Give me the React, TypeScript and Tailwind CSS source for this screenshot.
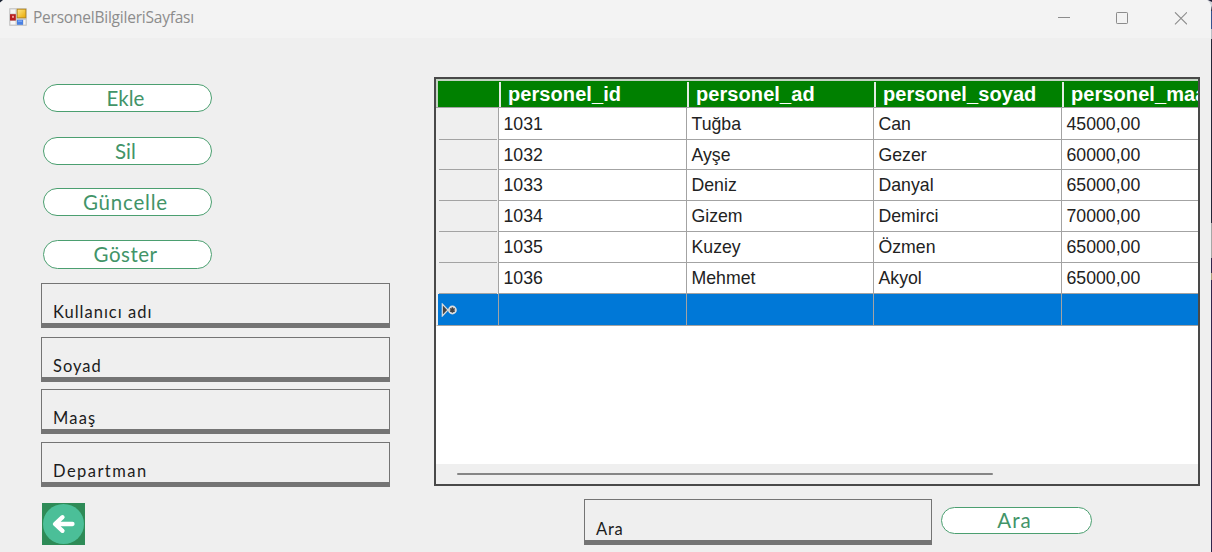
import type { ReactNode } from 'react';

const gothic = "font-['Century_Gothic','Lato',sans-serif]";

function PillButton({ children, className }: { children: ReactNode; className: string }) {
  return (
    <button
      className={`flex shrink-0 items-center justify-center rounded-full border-[1.5px] border-[#4b9f70] bg-white text-[20.5px] leading-none whitespace-nowrap text-[#429468] ${gothic} ${className}`}
    >
      {children}
    </button>
  );
}

function Field({ label, className }: { label: string; className: string }) {
  return (
    <div
      className={`flex shrink-0 items-end border border-b-[5px] border-[#747474] bg-[#efefef] pb-px pl-[11px] text-[16.5px] leading-5 whitespace-nowrap text-[#1c1c1c] ${gothic} ${className}`}
    >
      <span>{label}</span>
    </div>
  );
}

function AppIcon() {
  return (
    <svg width="18" height="18" viewBox="0 0 18 18" className="shrink-0">
      <defs>
        <linearGradient id="gold" x1="0" y1="0" x2="1" y2="1">
          <stop offset="0" stopColor="#ffe98a" />
          <stop offset="1" stopColor="#e9a800" />
        </linearGradient>
      </defs>
      <rect width="18" height="18" rx="1" fill="#cccccc" />
      <rect x="1.5" y="1.5" width="5" height="4" fill="#f7f7f7" />
      <rect x="1.5" y="13" width="5" height="3.5" fill="#f7f7f7" />
      <rect x="14.5" y="12" width="2" height="4.5" fill="#f7f7f7" />
      <rect x="1" y="6.2" width="5.8" height="6.3" fill="#b81f1f" />
      <rect x="3" y="7.8" width="2" height="2" fill="#ee9a94" />
      <rect x="8.2" y="1.2" width="8.6" height="8.6" fill="url(#gold)" stroke="#b98714" strokeWidth="0.9" />
      <rect x="8" y="11.8" width="6" height="5" fill="#4a80e2" />
      <rect x="9" y="12.5" width="4" height="1.3" fill="#82adf5" />
    </svg>
  );
}

const rows = [
  { id: '1031', ad: 'Tuğba', soyad: 'Can', maas: '45000,00', h: 'h-8' },
  { id: '1032', ad: 'Ayşe', soyad: 'Gezer', maas: '60000,00', h: 'h-[30px]' },
  { id: '1033', ad: 'Deniz', soyad: 'Danyal', maas: '65000,00', h: 'h-[31px]' },
  { id: '1034', ad: 'Gizem', soyad: 'Demirci', maas: '70000,00', h: 'h-[31px]' },
  { id: '1035', ad: 'Kuzey', soyad: 'Özmen', maas: '65000,00', h: 'h-[31px]' },
  { id: '1036', ad: 'Mehmet', soyad: 'Akyol', maas: '65000,00', h: 'h-[31px]' },
];

const columns = 'grid w-[812px] grid-cols-[63px_188px_187px_188px_186px]';

function HeaderCell({ children }: { children: string }) {
  return (
    <div className="flex items-center">
      <span className="h-[25px] w-0.5 shrink-0 bg-[#e4ebe4]" />
      <span className="pl-[7px] text-[20px] leading-none font-bold tracking-[0.08px]">{children}</span>
    </div>
  );
}

function Cell({ children }: { children?: string }) {
  return (
    <div className="flex items-center border-r border-b border-[#a3a3a3] pt-0.5 pl-[4.5px]">
      {children}
    </div>
  );
}

function DataGrid() {
  return (
    <div className="flex h-[409px] w-[766px] flex-col overflow-hidden border-2 border-[#494949] bg-white font-['Liberation_Sans',Arial,sans-serif] text-[17.7px] leading-none whitespace-nowrap text-[#222222]">
      <div className="h-0.5 shrink-0 bg-[#c4d4c4]" />
      <div className={`${columns} h-[27px] shrink-0 border-b border-[#a3a3a3] bg-[#008000] text-white`}>
        <div className="border-l-2 border-[#c4d4c4]" />
        <HeaderCell>personel_id</HeaderCell>
        <HeaderCell>personel_ad</HeaderCell>
        <HeaderCell>personel_soyad</HeaderCell>
        <HeaderCell>personel_maas</HeaderCell>
      </div>
      {rows.map((r) => (
        <div key={r.id} className={`${columns} ${r.h} shrink-0`}>
          <div className="flex border-r border-[#a3a3a3] bg-[#efefef] pr-px pl-[3px]">
            <div className="grow border-b border-[#a3a3a3]" />
          </div>
          <Cell>{r.id}</Cell>
          <Cell>{r.ad}</Cell>
          <Cell>{r.soyad}</Cell>
          <Cell>{r.maas}</Cell>
        </div>
      ))}
      <div className={`${columns} h-8 shrink-0 bg-[#0078d7]`}>
        <div className="flex items-center border-r border-b border-l-2 border-[#a3a3a3] border-l-[#efefef] pl-[3px]">
          <svg width="17" height="14" viewBox="0 0 17 14">
            <path d="M1.3 1v12L7 7z" fill="#444444" stroke="#dddddd" strokeWidth="1.2" />
            <circle cx="11.4" cy="7" r="4.4" fill="#dedede" />
            <path d="M11.4 4.2v5.6M9 5.6l4.8 2.8M13.800 5.6L9 8.4" stroke="#444444" strokeWidth="1.6" />
          </svg>
        </div>
        <Cell />
        <Cell />
        <Cell />
        <Cell />
      </div>
      <div className="grow" />
      <div className="flex h-5 shrink-0 items-center bg-[#efefef] pl-[21px]">
        <div className="h-0.5 w-[536px] rounded-full bg-[#858585]" />
      </div>
    </div>
  );
}

export default function App() {
  return (
    <div className="relative flex h-[552px] w-[1212px] flex-col overflow-hidden bg-[#efefef]">
      <header className="flex h-[38px] shrink-0 items-center bg-[#f3f3f3] pl-[9px]">
        <div className="flex h-full grow items-start gap-1.5 pt-2">
          <AppIcon />
          <span className="font-['Segoe_UI','Open_Sans',sans-serif] text-[15.5px] leading-[19px] tracking-[-0.22px] text-[#8c8c8c]">
            PersonelBilgileriSayfası
          </span>
        </div>
        <div className="flex h-full items-start gap-[45px] pt-3 pr-[25px]">
          <svg width="13" height="13" viewBox="0 0 13 13"><path d="M0 5.5h12" stroke="#8c8c8c" /></svg>
          <svg width="13" height="13" viewBox="0 0 13 13"><rect x="0.5" y=".5" width="11" height="11" rx=".7" fill="none" stroke="#8c8c8c" /></svg>
          <svg width="13" height="13" viewBox="0 0 13 13"><path d="M1 .3l12 12m0-12l-12 12" stroke="#8c8c8c" strokeWidth="1.1" /></svg>
        </div>
      </header>

      <main className="flex grow">
        <section className="flex w-[434px] shrink-0 flex-col pl-[41px]">
          <div className="flex flex-col pt-[46px] pl-[2px]">
            <PillButton className="mb-[25px] h-7 w-[169px] pr-1">Ekle</PillButton>
            <PillButton className="mb-[23px] h-7 w-[169px] pr-1">Sil</PillButton>
            <PillButton className="mb-6 h-7 w-[169px] pr-1 tracking-[0.8px]">Güncelle</PillButton>
            <PillButton className="mb-[14px] h-[29px] w-[169px] pr-1 tracking-[0.5px]">Göster</PillButton>
          </div>
          <Field label="Kullanıcı adı" className="mb-[9px] h-[45px] w-[349px] tracking-[1px]" />
          <Field label="Soyad" className="mb-[7px] h-[45px] w-[349px] tracking-[1px]" />
          <Field label="Maaş" className="mb-2 h-[45px] w-[349px] tracking-[1.2px]" />
          <Field label="Departman" className="mb-4 h-[45px] w-[349px] tracking-[1.45px]" />
          <button className="ml-px h-[42px] w-[43px] shrink-0 bg-[#2e8b57]">
            <svg width="43" height="42" viewBox="0 0 43 42">
              <ellipse cx="21.5" cy="21" rx="20.5" ry="20" fill="#4bbf98" />
              <path d="M30.5 21H14M20.5 14.2L13 21l7.5 6.8" fill="none" stroke="#ffffff" strokeWidth="4.3" strokeLinecap="round" strokeLinejoin="round" />
            </svg>
          </button>
        </section>
        <section className="flex flex-col pt-[39px]">
          <DataGrid />
          <div className="flex items-start pt-[13px] pl-[150px]">
            <Field label="Ara" className="h-[46px] w-[348px] tracking-[0.8px]" />
            <PillButton className="mt-2 ml-[9px] h-[27px] w-[151px] pr-1 tracking-[1px]">Ara</PillButton>
          </div>
        </section>
      </main>

      {/* Desktop visible behind the window's edge and rounded corners */}
      <div className="absolute top-0 right-0 flex h-full w-px flex-col bg-[#32264d]">
        <div className="h-[11px] bg-[#1d2440]" />
        <div className="h-[18px] bg-[#36538f]" />
        <div className="h-[10px] bg-[#b9bec6]" />
        <div className="h-[184px] bg-[#252638]" />
        <div className="h-[35px] bg-[#a6a6a6]" />
        <div className="mt-[15px] h-[7px] bg-[#aaa078]" />
      </div>
      <svg className="absolute top-0 left-0" width="4" height="4"><path d="M0 0h3L0 2.5z" fill="#1b2433" /></svg>
      <svg className="absolute top-0 right-0" width="6" height="11"><path d="M1 0h5v11Q5.500 3 1 0z" fill="#d0d2d8" /><path d="M2 0h4v2z" fill="#1b1b33" /></svg>
    </div>
  );
}
